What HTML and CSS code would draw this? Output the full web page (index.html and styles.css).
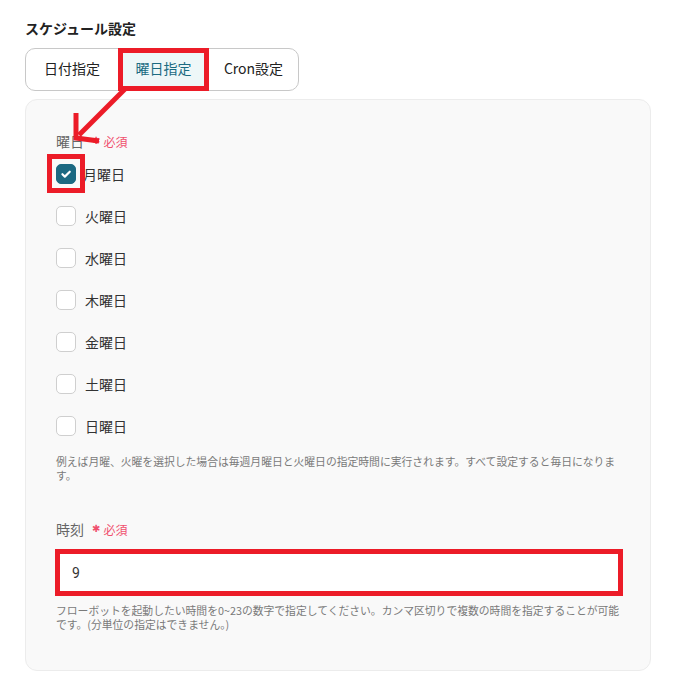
FILE: index.html
```html
<!DOCTYPE html>
<html lang="ja">
<head>
<meta charset="utf-8">
<link rel="stylesheet" href="styles.css">
</head>
<body>
<div class="page">
  <h2 class="title">スケジュール設定</h2>
  <div class="tabs">
    <div class="tab">日付指定</div>
    <div class="tab active">曜日指定</div>
    <div class="tab">Cron設定</div>
  </div>
  <div class="panel">
    <div class="label">曜日<span class="req"><span class="star">✱</span>必須</span></div>
    <ul class="days">
      <li class="day"><span class="box checked marked"><svg viewBox="0 0 20 20" width="20" height="20"><path d="M6 10.3l2.7 2.6L14.2 7.5" fill="none" stroke="#fff" stroke-width="2.4" stroke-linecap="round" stroke-linejoin="round"/></svg></span>月曜日</li>
      <li class="day"><span class="box"></span>火曜日</li>
      <li class="day"><span class="box"></span>水曜日</li>
      <li class="day"><span class="box"></span>木曜日</li>
      <li class="day"><span class="box"></span>金曜日</li>
      <li class="day"><span class="box"></span>土曜日</li>
      <li class="day"><span class="box"></span>日曜日</li>
    </ul>
    <p class="help">例えば月曜、火曜を選択した場合は毎週月曜日と火曜日の指定時間に実行されます。すべて設定すると毎日になります。</p>
    <div class="label label-time">時刻<span class="req"><span class="star">✱</span>必須</span></div>
    <div class="input">9</div>
    <p class="help help-time">フローボットを起動したい時間を0~23の数字で指定してください。カンマ区切りで複数の時間を指定することが可能です。(分単位の指定はできません。)</p>
  </div>
  <svg class="arrow" width="140" height="150" viewBox="0 0 140 150">
    <g fill="none" stroke="#ec1c28" stroke-width="5" stroke-linecap="butt" stroke-linejoin="miter">
      <line x1="125" y1="89" x2="79" y2="135"/>
      <polyline points="76,113 76,138 99,141"/>
    </g>
  </svg>
</div>
</body>
</html>
```

FILE: styles.css
```css
*, *::before, *::after { box-sizing: border-box; }
body {
  margin: 0;
  background: #fff;
  font-family: "Noto Sans CJK JP", "Noto Sans", sans-serif;
  color: #333;
}
.page {
  position: relative;
  padding: 18px 31px 0 25px;
}
.title {
  margin: 0 0 10px;
  font-size: 14px;
  line-height: 20px;
  font-weight: 700;
  color: #222;
}
.tabs {
  display: inline-flex;
  border: 1px solid #c8c8c8;
  border-radius: 10px;
  height: 43px;
}
.tab {
  position: relative;
  display: flex;
  align-items: center;
  justify-content: center;
  padding-bottom: 3px;
  font-size: 14px;
  color: #222;
  width: 92px;
}
.tab:nth-child(2) { width: 91px; }
.tab:nth-child(3) { width: 89px; }
.tab.active {
  background: #eef7f8;
  color: #1b6b82;
}
.tab.active::after {
  content: "";
  position: absolute;
  top: -1px;
  bottom: -1px;
  left: 0;
  right: 0;
  border: 5px solid #ec1c28;
}
.panel {
  margin-top: 8px;
  background: #f9f9f9;
  border: 1px solid #ececec;
  border-radius: 12px;
  padding: 31px 30px 39px 30px;
}
.label {
  display: flex;
  align-items: center;
  height: 20px;
  font-size: 14px;
  color: #666;
}
.req {
  display: flex;
  align-items: center;
  color: #f0506e;
  font-size: 12px;
  margin-left: 8px;
}
.star {
  font-family: "DejaVu Sans", sans-serif;
  font-size: 10px;
  line-height: 10px;
  margin-right: 3px;
}
.days {
  list-style: none;
  margin: 2px 0 0;
  padding: 0;
}
.day {
  display: flex;
  align-items: center;
  height: 42px;
  font-size: 14px;
  color: #333;
}
.box {
  position: relative;
  width: 20px;
  height: 20px;
  border: 1px solid #cfcfcf;
  border-radius: 5px;
  background: #fff;
  margin-right: 9px;
  display: flex;
  align-items: center;
  justify-content: center;
}
.box.checked {
  background: #1c6982;
  border-color: #1c6982;
  margin-right: 7px;
}
.box svg { display: block; }
.box.marked::after {
  content: "";
  position: absolute;
  left: -10px;
  top: -11px;
  width: 38px;
  height: 39px;
  border: 5px solid #ec1c28;
}
.help {
  margin: 7px 0 0;
  font-size: 10.8px;
  line-height: 14px;
  color: #7a7a7a;
}
.label-time { margin-top: 37px; }
.input {
  margin: 10px 0 0 -1px;
  height: 47px;
  width: 568px;
  border: 5px solid #ec1c28;
  background: #fff;
  padding-left: 12px;
  display: flex;
  align-items: center;
  font-family: "Roboto", "Noto Sans", sans-serif;
  font-size: 14px;
  color: #333;
}
.help-time { margin-top: 7px; }
.arrow {
  position: absolute;
  left: 0;
  top: 0;
}
```
